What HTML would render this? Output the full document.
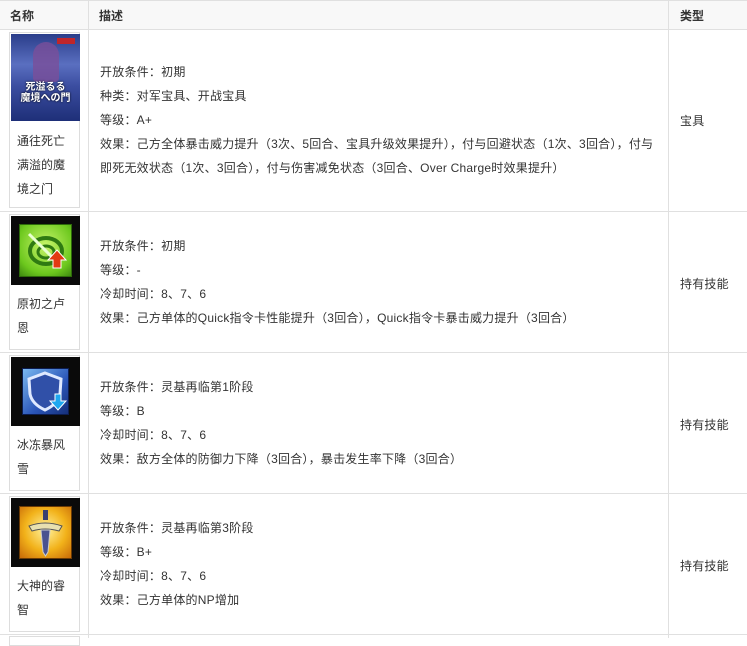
<!DOCTYPE html>
<html><head><meta charset="utf-8"><style>
*{margin:0;padding:0;box-sizing:border-box}
body{width:747px;height:638px;background:#fff;font-family:"Liberation Sans","Noto Sans CJK SC",sans-serif;font-size:12px;color:#333;position:relative;overflow:hidden}
.a{position:absolute}
.hl{position:absolute;left:0;width:747px;height:1px;background:#e0e0e0}
.vl{position:absolute;top:0;width:1px;height:638px;background:#e0e0e0}
.hdr{position:absolute;left:0;top:0;width:747px;height:29px;background:#f8f8f8}
.th{position:absolute;top:7px;font-weight:bold;font-size:12px;color:#333}
.box{position:absolute;left:9px;width:71px;border:1px solid #ddd;background:#fff}
.img{position:absolute;left:1px;top:1px;width:69px;height:69px;background:#0a0a0a;overflow:hidden}
.nm{position:absolute;left:7px;font-size:12px;line-height:24px;color:#333}
.d{position:absolute;left:100px;line-height:24px;font-size:12px;color:#333;width:565px;letter-spacing:0.22px}
.t{position:absolute;left:680px;font-size:12px;color:#333;letter-spacing:0.2px}
</style></head><body>
<div class="hdr"></div>
<div class="hl" style="top:0"></div>
<div class="hl" style="top:29px"></div>
<div class="hl" style="top:211px"></div>
<div class="hl" style="top:352px"></div>
<div class="hl" style="top:493px"></div>
<div class="hl" style="top:634px"></div>
<div class="vl" style="left:88px"></div>
<div class="vl" style="left:668px"></div>
<div class="th" style="left:10px">名称</div>
<div class="th" style="left:99px">描述</div>
<div class="th" style="left:680px">类型</div>

<!-- row1 -->
<div class="box" style="top:32px;height:176px">
 <div class="img" style="height:87px;background:linear-gradient(180deg,#2a3d8a 0%,#5a6fc0 35%,#3b4da0 60%,#1e2f78 100%)">
  <div class="a" style="left:22px;top:8px;width:26px;height:40px;border-radius:13px 13px 4px 4px;background:#7a4f9a;opacity:.8"></div>
  <div class="a" style="left:0;top:48px;width:69px;font-size:10px;color:#fff;font-weight:bold;text-align:center;line-height:11px;text-shadow:0 0 2px #000">死溢るる<br>魔境への門</div>
  <div class="a" style="left:46px;top:4px;width:18px;height:6px;background:#c0262a"></div>
 </div>
 <div class="nm" style="top:96px">通往死亡<br>满溢的魔<br>境之门</div>
</div>
<div class="d" style="top:60px">开放条件：初期<br>种类：对军宝具、开战宝具<br>等级：A+<br>效果：己方全体暴击威力提升（3次、5回合、宝具升级效果提升），付与回避状态（1次、3回合），付与<br>即死无效状态（1次、3回合），付与伤害减免状态（3回合、Over Charge时效果提升）</div>
<div class="t" style="top:112px">宝具</div>

<!-- row2 -->
<div class="box" style="top:214px;height:136px">
 <div class="img">
  <div class="a" style="left:8px;top:8px;width:53px;height:53px;background:radial-gradient(circle at 50% 40%,#c8f56a,#6dc81e 70%,#3f8a10);border:1px solid #2d6a0a"></div>
  <svg class="a" style="left:8px;top:8px" width="53" height="53" viewBox="0 0 53 53"><ellipse cx="27" cy="27" rx="16" ry="13" fill="none" stroke="#2f7a12" stroke-width="4"/><ellipse cx="27" cy="28" rx="8" ry="6" fill="none" stroke="#2f7a12" stroke-width="3"/><line x1="10" y1="10" x2="38" y2="38" stroke="#e8ffd0" stroke-width="3"/><path d="M34 44 L34 36 L29 36 L38 26 L47 36 L42 36 L42 44 Z" fill="#e23a12" stroke="#fff" stroke-width="1"/></svg>
 </div>
 <div class="nm" style="top:77px">原初之卢<br>恩</div>
</div>
<div class="d" style="top:234px">开放条件：初期<br>等级：-<br>冷却时间：8、7、6<br>效果：己方单体的Quick指令卡性能提升（3回合），Quick指令卡暴击威力提升（3回合）</div>
<div class="t" style="top:275px">持有技能</div>

<!-- row3 -->
<div class="box" style="top:355px;height:136px">
 <div class="img">
  <div class="a" style="left:11px;top:11px;width:47px;height:47px;background:linear-gradient(135deg,#7ab8f0,#2a55b8 60%,#16307a);border:1px solid #0c1d50"></div>
  <svg class="a" style="left:11px;top:11px" width="47" height="47" viewBox="0 0 47 47"><path d="M23 5 L39 11 L38 26 Q36 36 23 42 Q10 36 8 26 L7 11 Z" fill="#3050a8" stroke="#dfe9ff" stroke-width="3"/><path d="M33 26 L33 33 L28 33 L36 42 L44 33 L39 33 L39 26 Z" fill="#1ea8f0" stroke="#fff" stroke-width="1"/></svg>
 </div>
 <div class="nm" style="top:77px">冰冻暴风<br>雪</div>
</div>
<div class="d" style="top:375px">开放条件：灵基再临第1阶段<br>等级：B<br>冷却时间：8、7、6<br>效果：敌方全体的防御力下降（3回合），暴击发生率下降（3回合）</div>
<div class="t" style="top:416px">持有技能</div>

<!-- row4 -->
<div class="box" style="top:496px;height:136px">
 <div class="img">
  <div class="a" style="left:8px;top:8px;width:53px;height:53px;background:radial-gradient(circle at 50% 45%,#fff3a0,#f2b21a 55%,#c86a08);border:1px solid #6a3a04"></div>
  <svg class="a" style="left:8px;top:8px" width="53" height="53" viewBox="0 0 53 53"><rect x="24" y="4" width="5" height="10" fill="#3a3f70"/><path d="M10 20 Q26 14 43 20 L40 25 Q26 21 13 25 Z" fill="#e8e0b0" stroke="#555" stroke-width="1"/><path d="M22 24 L31 24 L29 46 L26.5 50 L24 46 Z" fill="#4a5290" stroke="#ccc" stroke-width="1"/></svg>
 </div>
 <div class="nm" style="top:77px">大神的睿<br>智</div>
</div>
<div class="d" style="top:516px">开放条件：灵基再临第3阶段<br>等级：B+<br>冷却时间：8、7、6<br>效果：己方单体的NP增加</div>
<div class="t" style="top:557px">持有技能</div>
<div class="box" style="top:636px;height:10px"></div>
</body></html>
